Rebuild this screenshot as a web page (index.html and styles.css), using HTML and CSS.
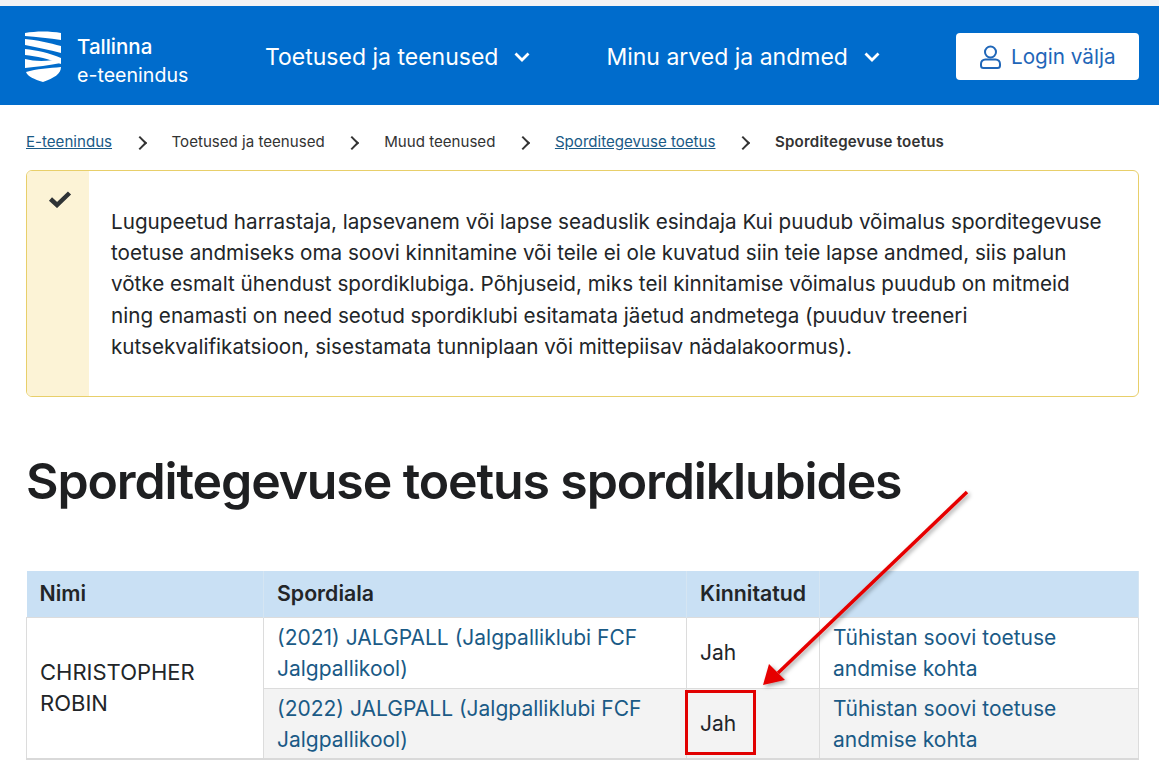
FILE: index.html
```html
<!DOCTYPE html>
<html>
<head>
  <title>Sporditegevuse toetus</title>
  <link rel="stylesheet" href="styles.css">
</head>
<body>
  <header class="site-header">
    <a class="logo" href="#">
      <svg class="logo-mark" width="38" height="52" viewBox="0 0 38 52">
        <path fill="#fff" d="M1 2C12 0 26 0 37 2V9C26 7 12 6 1 5Z"/>
        <path fill="#fff" d="M1 8C12 9 26 12 37 15V22C26 19 12 16 1 14Z"/>
        <path fill="#fff" d="M1 18C12 19 26 22 37 27V33C26 28 12 25 1 24Z"/>
        <path fill="#fff" d="M1 28C12 31 26 30 37 28V32C26 34 12 36 1 37Z"/>
        <path fill="#fff" d="M2 41C12 38 26 37 37 36C37 43 30 47 19 51C10 48 4 46 2 41Z"/>
      </svg>
      <span class="logo-text"><strong>Tallinna</strong><br>e-teenindus</span>
    </a>
    <nav class="main-nav">
      <a href="#">Toetused ja teenused
        <svg width="16" height="10" viewBox="0 0 16 10"><path d="M1.500 1.500 8 8l6.500-6.500" fill="none" stroke="#fff" stroke-width="2.800"/></svg>
      </a>
      <a href="#">Minu arved ja andmed
        <svg width="16" height="10" viewBox="0 0 16 10"><path d="M1.500 1.500 8 8l6.500-6.500" fill="none" stroke="#fff" stroke-width="2.800"/></svg>
      </a>
    </nav>
    <a class="login" href="#">
      <svg width="21" height="24" viewBox="0 0 21 24" fill="none" stroke="#1f66b8" stroke-width="2">
        <circle cx="10.500" cy="7" r="5.500"/>
        <path d="M5.500 14.500h10c2.800 0 4.500 2 4.500 4.500v1.500c0 1.400-1 2.500-2.500 2.500h-14C2 23 1 21.900 1 20.500V19c0-2.500 1.700-4.500 4.500-4.500Z"/>
      </svg>
      Login välja
    </a>
  </header>

  <main class="content">
    <ol class="breadcrumbs">
      <li><a href="#">E-teenindus</a></li>
      <li>Toetused ja teenused</li>
      <li>Muud teenused</li>
      <li><a href="#">Sporditegevuse toetus</a></li>
      <li class="current">Sporditegevuse toetus</li>
    </ol>

    <div class="notice">
      <div class="notice-icon">
        <svg width="24" height="18" viewBox="0 0 24 18"><path d="M2.500 9 9 15 21.500 3" fill="none" stroke="#2f3336" stroke-width="4.500"/></svg>
      </div>
      <p>Lugupeetud harrastaja, lapsevanem või lapse seaduslik esindaja Kui puudub võimalus sporditegevuse toetuse andmiseks oma soovi kinnitamine või teile ei ole kuvatud siin teie lapse andmed, siis palun võtke esmalt ühendust spordiklubiga. Põhjuseid, miks teil kinnitamise võimalus puudub on mitmeid ning enamasti on need seotud spordiklubi esitamata jäetud andmetega (puuduv treeneri kutsekvalifikatsioon, sisestamata tunniplaan või mittepiisav nädalakoormus).</p>
    </div>

    <h1>Sporditegevuse toetus spordiklubides</h1>

    <table class="claims">
      <thead>
        <tr>
          <th class="col-name">Nimi</th>
          <th class="col-sport">Spordiala</th>
          <th class="col-ok">Kinnitatud</th>
          <th class="col-action"></th>
        </tr>
      </thead>
      <tbody>
        <tr>
          <td rowspan="2" class="name-cell">CHRISTOPHER ROBIN</td>
          <td><a href="#">(2021) JALGPALL (Jalgpalliklubi FCF Jalgpallikool)</a></td>
          <td>Jah</td>
          <td><a href="#">Tühistan soovi toetuse andmise kohta</a></td>
        </tr>
        <tr class="alt">
          <td><a href="#">(2022) JALGPALL (Jalgpalliklubi FCF Jalgpallikool)</a></td>
          <td>Jah</td>
          <td><a href="#">Tühistan soovi toetuse andmise kohta</a></td>
        </tr>
      </tbody>
    </table>
  </main>

  <!-- annotation drawn over the screenshot -->
  <div class="mark-box"></div>
  <svg class="mark-arrow" width="230" height="215" viewBox="0 0 230 215">
    <defs>
      <filter id="arrow-shadow" x="-10%" y="-10%" width="125%" height="125%">
        <feDropShadow dx="2" dy="2" stdDeviation="2" flood-color="#000" flood-opacity="0.35"/>
      </filter>
    </defs>
    <g filter="url(#arrow-shadow)">
      <path d="M211 6 22 187" stroke="#e60000" stroke-width="3.500" fill="none"/>
      <path d="M7 199 13 178 29 194Z" fill="#e60000"/>
    </g>
  </svg>
</body>
</html>
```

FILE: styles.css
```css
* {
  box-sizing: border-box;
}

html {
  background: #fff;
}

body {
  margin: 0;
  padding-top: 6px;
  background: linear-gradient(#f2f3f5 6px, #fff 6px);
  font-family: "Inter", sans-serif;
  color: #222528;
  overflow: hidden;
  height: 776px;
  position: relative;
}

a {
  color: #1a5a86;
  text-decoration: none;
}

.site-header {
  display: flex;
  align-items: center;
  height: 99px;
  padding: 2px 20px 0 24px;
  background: #006ccc;
}

.logo {
  display: flex;
  align-items: center;
  gap: 15px;
  color: #fff;
  width: 241px;
  font-size: 19.600px;
  line-height: 28px;
}

.logo-text {
  padding-top: 8px;
}

.logo strong {
  font-size: 20.500px;
  font-weight: 500;
}

.main-nav {
  display: flex;
  gap: 76px;
  flex: 1;
}

.main-nav a {
  display: flex;
  align-items: center;
  gap: 16px;
  color: #fff;
  font-size: 23px;
}

.login {
  display: flex;
  align-items: center;
  gap: 10px;
  height: 47px;
  width: 183px;
  padding-left: 24px;
  border-radius: 4px;
  background: #fff;
  color: #1f66b8;
  font-size: 20.700px;
}

.content {
  padding: 0 20px 0 26px;
}

.breadcrumbs {
  display: flex;
  align-items: center;
  height: 65px;
  margin: 0;
  padding: 8px 0 0;
  list-style: none;
  font-size: 15.100px;
  color: #333;
}

.breadcrumbs a {
  text-decoration: underline;
}

.breadcrumbs li + li::before {
  content: "";
  display: inline-block;
  width: 8px;
  height: 8px;
  margin: 0 27px 0 22.500px;
  border-top: 2px solid #333;
  border-right: 2px solid #333;
  transform: translateY(1px) rotate(45deg);
}

.breadcrumbs .current {
  font-weight: 600;
  letter-spacing: 0.2px;
}

.notice {
  display: flex;
  height: 227px;
  border: 1px solid #e8cf6a;
  border-radius: 6px;
  overflow: hidden;
}

.notice-icon {
  flex: 0 0 62px;
  padding: 19px 0 0 21px;
  background: #fcf3d6;
}

.notice p {
  margin: 0;
  padding: 35px 22px 0;
  font-size: 20.650px;
  line-height: 31.200px;
}

h1 {
  margin: 56px 0 62px;
  font-size: 50px;
  line-height: 56px;
  font-weight: 600;
  letter-spacing: -1.120px;
  color: #1e1f21;
}

.claims {
  width: 1113px;
  border-collapse: collapse;
  table-layout: fixed;
  font-size: 21px;
  line-height: 31px;
  border-bottom: 2px solid #d9d9d9;
}

.claims th {
  height: 46px;
  padding: 0 13px;
  background: #c9e0f4;
  text-align: left;
  font-size: 21.300px;
  font-weight: 600;
  border-right: 1px solid #d5e5f2;
}

.claims td {
  height: 71px;
  padding: 4px 13px;
  border: 1px solid #dcdcdc;
}

.claims .alt td {
  height: 70px;
  padding: 4px 13px 3px;
  background: #f3f3f3;
}

.claims .name-cell {
  background: #fff;
  font-size: 22px;
}

.col-name {
  width: 237px;
}

.col-sport {
  width: 423px;
}

.col-ok {
  width: 133px;
}

/* annotation */
.mark-box {
  position: absolute;
  left: 685px;
  top: 690px;
  width: 71px;
  height: 65px;
  border: 3px solid #e10000;
}

.mark-arrow {
  position: absolute;
  left: 756px;
  top: 486px;
}
```
